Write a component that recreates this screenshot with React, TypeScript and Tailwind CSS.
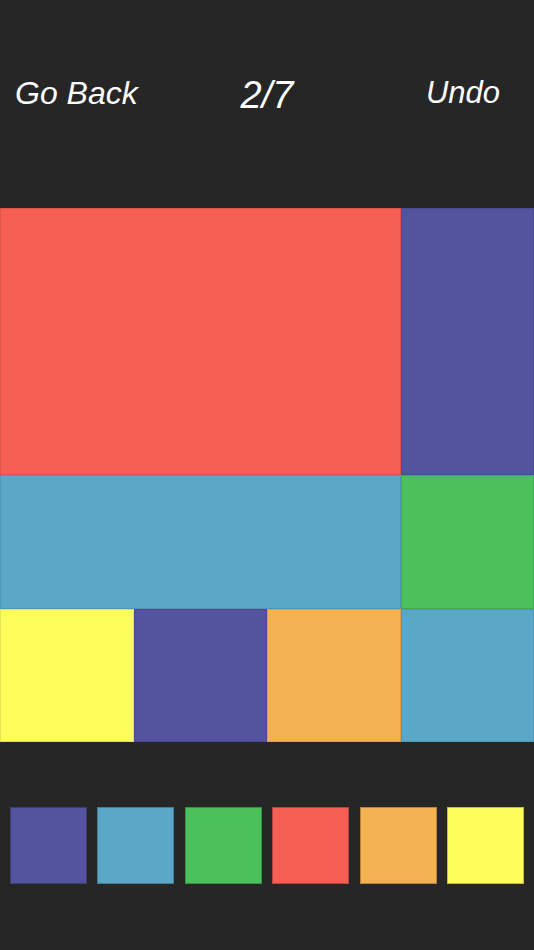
import React from "react";

const cell = "border border-black/10";
const sw = "w-[77px] h-[77px] border border-black/25";

export default function App() {
  return (
    <div
      className="w-[534px] h-[950px] bg-[#262626] text-white overflow-hidden flex flex-col"
      style={{ fontFamily: '"Liberation Sans", Arial, sans-serif' }}
    >
      <div className="h-[208px] grid grid-cols-3 items-start pt-[76px] italic">
        <div className="pl-[15px] text-[32px] leading-none mt-[1px]">Go Back</div>
        <div className="text-center text-[38px] leading-none pl-[0px]">2/7</div>
        <div className="text-right pr-[34px] text-[31px] leading-none mt-[1px]">Undo</div>
      </div>
      <div className="h-[534px] grid grid-cols-4 grid-rows-4">
        <div className={`col-span-3 row-span-2 bg-[#F55E53] ${cell}`} />
        <div className={`row-span-2 bg-[#53539F] ${cell}`} />
        <div className={`col-span-3 bg-[#5BA7C7] ${cell}`} />
        <div className={`bg-[#4BC05B] ${cell}`} />
        <div className={`bg-[#FDFE5C] ${cell}`} />
        <div className={`bg-[#53539F] ${cell}`} />
        <div className={`bg-[#F3B251] ${cell}`} />
        <div className={`bg-[#5BA7C7] ${cell}`} />
      </div>
      <div className="flex justify-between px-[10px] pt-[65px]">
        <div className={`bg-[#53539F] ${sw}`} />
        <div className={`bg-[#5BA7C7] ${sw}`} />
        <div className={`bg-[#4BC05B] ${sw}`} />
        <div className={`bg-[#F55E53] ${sw}`} />
        <div className={`bg-[#F3B251] ${sw}`} />
        <div className={`bg-[#FDFE5C] ${sw}`} />
      </div>
    </div>
  );
}
